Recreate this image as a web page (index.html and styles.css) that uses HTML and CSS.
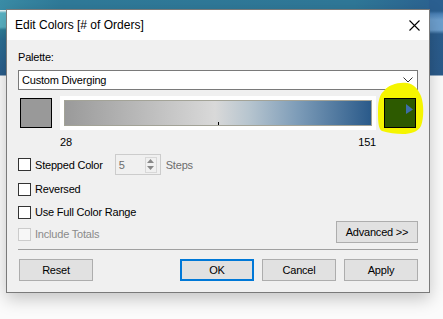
FILE: index.html
```
<!DOCTYPE html>
<html lang="en">
<head>
  <meta charset="UTF-8">
  <title>Edit Colors</title>
  <link rel="stylesheet" href="styles.css">
</head>
<body>
  <div class="dialog">
    <div class="titlebar">
      <span class="title">Edit Colors [# of Orders]</span>
      <svg class="close" width="11" height="11" viewBox="0 0 11 11">
        <path d="M0.5 0.5 L10.5 10.5 M10.5 0.5 L0.5 10.5" stroke="#000" stroke-width="1.1" fill="none"/>
      </svg>
    </div>

    <div class="content">
      <div class="label">Palette:</div>
      <div class="select">
        <span>Custom Diverging</span>
        <svg class="chevron" width="10" height="6" viewBox="0 0 10 6">
          <path d="M0.5 0.5 L5 5 L9.5 0.5" stroke="#333" stroke-width="1" fill="none"/>
        </svg>
      </div>

      <!-- rampe de couleurs -->
      <div class="ramp-row">
        <div class="swatch swatch-gray"></div>
        <div class="ramp">
          <div class="ramp-bar"><div class="tick"></div></div>
        </div>
        <div class="pick">
          <svg class="highlight" width="52" height="56" viewBox="0 0 52 56">
            <path d="M10 9 C14 3 24 0 33 1 C40 2 44 7 47 14 C50 22 50 36 47 44 C44 50 36 52 29 52 C22 52 14 51 8 49 C4 47 4 38 4 28 C4 18 6 12 10 9 Z" fill="#f5f500"/>
          </svg>
          <div class="swatch swatch-green">
            <svg class="arrow" width="32" height="30" viewBox="0 0 32 30">
              <path d="M22 6 L29 11.5 L22 16 Z" fill="#3d6ea8"/>
            </svg>
          </div>
        </div>
      </div>
      <div class="range">
        <span>28</span>
        <span>151</span>
      </div>

      <div class="options">
        <div class="row row-first">
          <div class="check"><span class="box"></span>Stepped Color</div>
          <div class="spin">
            <span>5</span>
            <div class="spin-btns">
              <svg width="7" height="4" viewBox="0 0 7 4"><path d="M0 4 L3.5 0 L7 4 Z" fill="#888"/></svg>
              <svg width="7" height="4" viewBox="0 0 7 4"><path d="M0 0 L3.5 4 L7 0 Z" fill="#888"/></svg>
            </div>
          </div>
          <span class="muted">Steps</span>
        </div>
        <div class="row">
          <div class="check"><span class="box"></span>Reversed</div>
        </div>
        <div class="row">
          <div class="check"><span class="box"></span>Use Full Color Range</div>
        </div>
        <div class="row row-last">
          <div class="check disabled"><span class="box"></span>Include Totals</div>
          <button class="btn btn-adv">Advanced &gt;&gt;</button>
        </div>
      </div>

      <div class="separator"></div>

      <div class="buttons">
        <button class="btn">Reset</button>
        <div class="spacer"></div>
        <button class="btn btn-ok">OK</button>
        <button class="btn">Cancel</button>
        <button class="btn">Apply</button>
      </div>
    </div>
  </div>
</body>
</html>
```

FILE: styles.css
```
body {
  margin: 0;
  font-family: "Liberation Sans", Arial, sans-serif;
  font-size: 11px;
  letter-spacing: -0.2px;
  color: #000;
  background:
    linear-gradient(to bottom, transparent 0, transparent 10px, #5ab2c4 13px, #5ab2c4 27px, #2f7e9a 30px, #2c6f95 40px, #2a5d8c 75px, transparent 76px) left top / 7px 100% no-repeat,
    linear-gradient(to bottom, #2b5f90 0, #2b5f90 11px, #4a80b5 14px, #6d9fce 20px, #6d9fce 30px, #2b5c8c 34px, #2a5a8a 75px, transparent 76px) right top / 14px 100% no-repeat,
    linear-gradient(to right, #3a8ca6 0, #2f7a99 14%, #2f7898 80%, #2b6090 100%) left top / 100% 10px no-repeat,
    #fbfbfb;
  height: 319px;
  overflow: hidden;
}

.dialog {
  margin: 9px 0 0 6px;
  width: 424px;
  border: 1px solid #7a7a7a;
  background: #f0f0f0;
  box-shadow: 0 6px 16px rgba(0, 0, 0, 0.22);
  box-sizing: border-box;
}

.titlebar {
  height: 30px;
  background: #fff;
  display: flex;
  align-items: center;
  justify-content: space-between;
  padding: 0 9px 0 8px;
}
.title {
  font-size: 12px;
  letter-spacing: 0;
}

.content {
  padding: 10px 11px 11px 11px;
}

.label {
  line-height: 15px;
}

.select {
  margin-top: 5px;
  height: 20px;
  box-sizing: border-box;
  border: 1px solid #7a7a7a;
  background: #fff;
  display: flex;
  align-items: center;
  justify-content: space-between;
  padding: 0 4px 0 3px;
}

.ramp-row {
  margin-top: 6px;
  display: flex;
  align-items: center;
  height: 34px;
}
.swatch {
  width: 32px;
  height: 30px;
  box-sizing: border-box;
  border: 1px solid #000;
}
.swatch-gray {
  margin-left: 2px;
  background: #999;
}
.ramp {
  margin-left: 8px;
  width: 316px;
  height: 34px;
  box-sizing: border-box;
  background: #fff;
  padding: 4px;
}
.ramp-bar {
  position: relative;
  height: 26px;
  box-sizing: border-box;
  border: 1px solid #a3a397;
  background: linear-gradient(to right, #9a9a9a 0%, #d9d9d9 49%, #b7c5cf 60%, #7d9cb8 76%, #2a5a8a 100%);
}
.tick {
  position: absolute;
  left: 153px;
  bottom: 0;
  width: 1px;
  height: 3px;
  background: #000;
}
.pick {
  position: relative;
  margin-left: 8px;
  width: 32px;
  height: 30px;
}
.highlight {
  position: absolute;
  left: -10px;
  top: -16px;
}
.swatch-green {
  position: relative;
  background: #2d5a00;
}
.arrow {
  position: absolute;
  left: -1px;
  top: -1px;
}

.range {
  margin-top: 5px;
  width: 358px;
  padding-left: 42px;
  box-sizing: border-box;
  display: flex;
  justify-content: space-between;
  line-height: 15px;
}

.options {
  margin-top: 4px;
}
.row {
  display: flex;
  align-items: center;
  height: 18px;
  margin-top: 5px;
}
.row-first {
  height: 21px;
  margin-top: 0;
}
.row-last {
  height: 22px;
  margin-top: 0;
  align-items: flex-start;
  justify-content: space-between;
}
.row-last .check {
  margin-top: 7px;
  line-height: 13px;
}
.check {
  display: flex;
  align-items: center;
}
.box {
  width: 13px;
  height: 13px;
  box-sizing: border-box;
  border: 1px solid #333;
  background: #fff;
  margin-right: 4px;
}
.disabled {
  color: #8a8a8a;
}
.disabled .box {
  border-color: #cccccc;
  background: #f7f7f7;
}

.spin {
  margin-left: 12px;
  width: 46px;
  height: 21px;
  box-sizing: border-box;
  border: 1px solid #cccccc;
  display: flex;
  align-items: center;
  justify-content: space-between;
  padding: 0 3px 0 3px;
  color: #6d6d6d;
}
.spin-btns {
  width: 12px;
  height: 16px;
  box-sizing: border-box;
  border: 1px solid #d8d8d8;
  display: flex;
  flex-direction: column;
  align-items: center;
  justify-content: space-around;
}
.muted {
  margin-left: 5px;
  color: #6d6d6d;
}

.separator {
  margin-top: 6px;
  height: 1px;
  background: #a0a0a0;
}

.buttons {
  margin-top: 9px;
  display: flex;
  gap: 8px;
  padding-left: 1px;
}
.spacer {
  flex: 1;
}
.btn {
  font-family: "Liberation Sans", Arial, sans-serif;
  font-size: 11px;
  letter-spacing: -0.2px;
  color: #000;
  width: 74px;
  height: 22px;
  box-sizing: border-box;
  border: 1px solid #adadad;
  background: #e1e1e1;
  padding: 0;
  margin: 0;
}
.btn-adv {
  width: 82px;
}
.btn-ok {
  border: 2px solid #0078d7;
}
```
